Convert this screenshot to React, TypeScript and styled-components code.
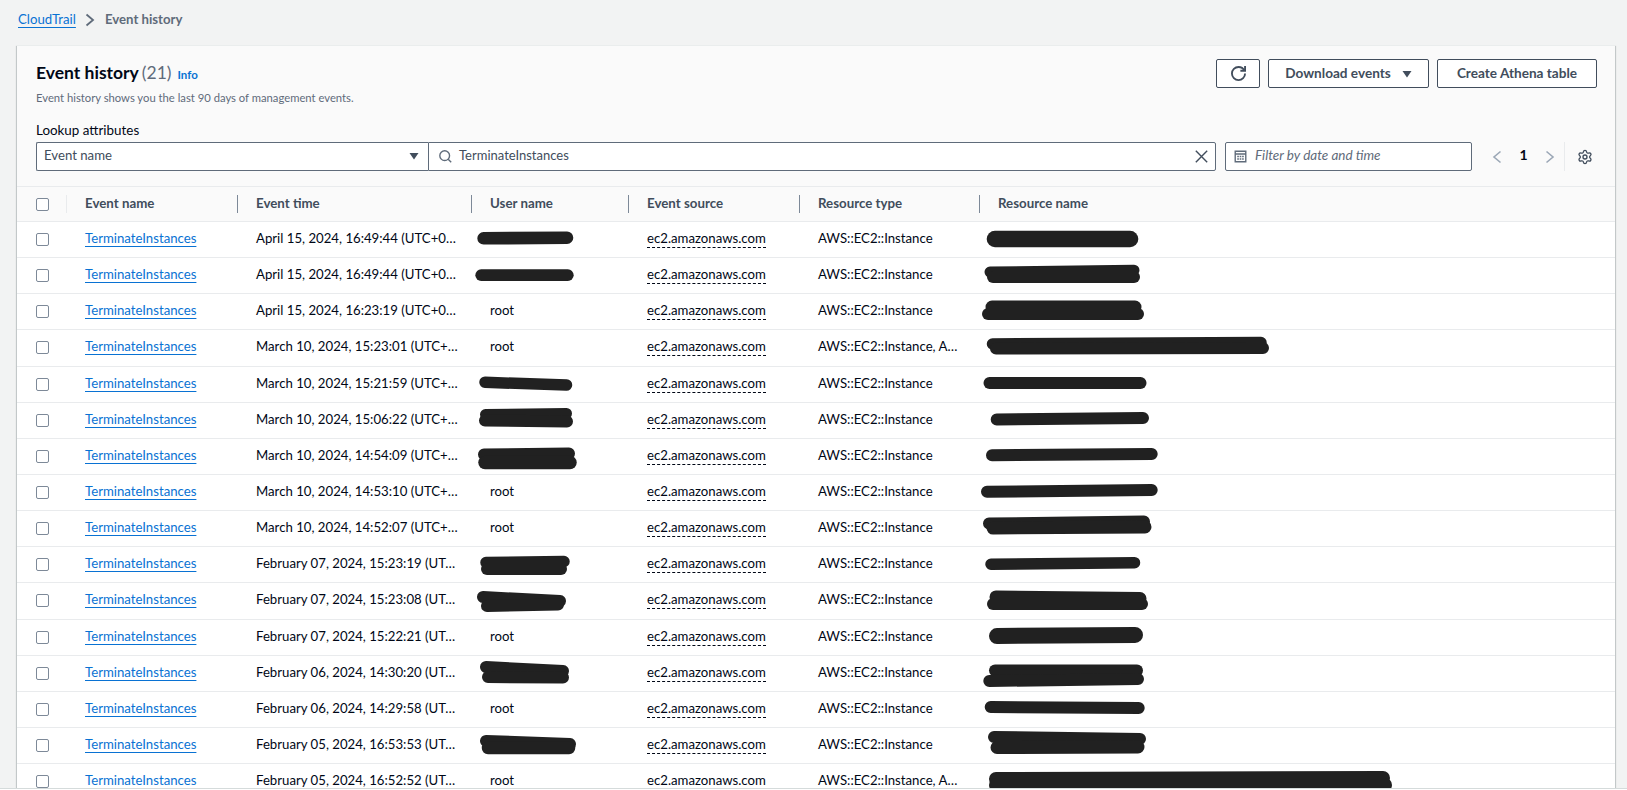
import React from "react";
import styled, { createGlobalStyle } from "styled-components";
import { Settings } from "lucide-react";

const GlobalStyle = createGlobalStyle`
  html, body {
    margin: 0;
    height: 100%;
    background: #f2f3f3;
  }
  body {
    font-family: Lato, Roboto, "Liberation Sans", sans-serif;
    font-size: 14px;
    color: #000716;
    overflow: hidden;
  }
  * {
    box-sizing: border-box;
  }
`;

const Page = styled.div`
  height: 790px;
  display: flex;
  flex-direction: column;
`;

const Main = styled.main`
  flex: 1;
  min-height: 0;
  overflow: hidden;
  padding: 0 12px 0 17px;
`;

const Footer = styled.footer`
  height: 2px;
  flex: none;
  background: #fff;
  border-top: 1px solid #d5dbdb;
`;

const Breadcrumbs = styled.nav`
  height: 45px;
  display: flex;
  align-items: flex-start;
  padding: 11px 0 0 1px;
  font-size: 13.2px;
  line-height: 17px;
`;

const CrumbLink = styled.a`
  color: #0972d3;
  text-decoration: underline;
  text-underline-offset: 3px;
`;

const CrumbChevron = styled.svg`
  width: 10px;
  height: 14px;
  margin: 2px 10px 0 9px;
  fill: none;
  stroke: #5f6b7a;
  stroke-width: 1.8;
`;

const CrumbCurrent = styled.span`
  color: #5f6b7a;
  font-weight: 700;
`;

const Card = styled.section`
  background: #fff;
  box-shadow: 0 1px 1px 0 rgba(0, 28, 36, 0.3), 1px 1px 1px 0 rgba(0, 28, 36, 0.15),
    -1px 1px 1px 0 rgba(0, 28, 36, 0.15);
  border-top: 1px solid #eaeded;
`;

const CardHeader = styled.header`
  background: #fafafa;
  padding: 13px 18px 15px 19px;
  border-bottom: 1px solid #e9ebed;
`;

const TopRow = styled.div`
  display: flex;
  justify-content: space-between;
  align-items: flex-start;
`;

const TitleBlock = styled.div`
  padding-top: 2px;
`;

const TitleLine = styled.div`
  display: flex;
  align-items: baseline;
  line-height: 24px;
`;

const Title = styled.h1`
  margin: 0;
  font-size: 17.5px;
  font-weight: 700;
  color: #000716;
`;

const Count = styled.span`
  margin-left: 3px;
  font-size: 17.5px;
  color: #5f6b7a;
`;

const InfoLink = styled.a`
  margin-left: 6px;
  font-size: 11.5px;
  font-weight: 700;
  color: #0972d3;
`;

const Description = styled.p`
  margin: 3px 0 0;
  font-size: 11.25px;
  line-height: 16px;
  color: #5f6b7a;
`;

const Actions = styled.div`
  display: flex;
  gap: 8px;
`;

const Button = styled.button<{ $width: number }>`
  width: ${(p) => p.$width}px;
  height: 29px;
  display: flex;
  align-items: center;
  justify-content: center;
  gap: 11px;
  padding: 0 0 2px;
  background: #fff;
  border: 1px solid #414d5c;
  border-radius: 2px;
  color: #414d5c;
  font-family: inherit;
  font-size: 13.6px;
  font-weight: 700;
`;

const RefreshIcon = styled.svg`
  width: 15px;
  height: 15px;
  margin-top: 2px;
  fill: none;
  stroke: #414d5c;
  stroke-width: 2;
`;

const Caret = styled.svg`
  width: 10px;
  height: 8px;
  margin-top: 2px;
  fill: currentColor;
`;

const LookupLabel = styled.label`
  display: block;
  margin-top: 15px;
  font-size: 13.4px;
  line-height: 18px;
`;

const FilterRow = styled.div`
  display: flex;
  align-items: center;
  margin-top: 3px;
`;

const Field = styled.div`
  height: 29px;
  display: flex;
  align-items: center;
  background: #fff;
  border: 1px solid #5f6b7a;
  border-radius: 2px;
  font-size: 13.2px;
`;

const SelectField = styled(Field)`
  width: 392px;
  flex: none;
  padding: 0 9px 4px 7px;
  justify-content: space-between;
  border-right: none;
  border-radius: 2px 0 0 2px;
  color: #414d5c;
`;

const SearchField = styled(Field)`
  width: 788px;
  flex: none;
  padding: 0 7px 0 10px;
  border-radius: 0 2px 2px 0;
`;

const FieldIcon = styled.svg`
  width: 13px;
  height: 13px;
  flex: none;
  fill: none;
  stroke: #5f6b7a;
  stroke-width: 1.7;
`;

const SearchText = styled.span`
  flex: 1;
  margin: 0 0 3px 7px;
  font-size: 13px;
  color: #414d5c;
`;

const ClearIcon = styled.svg`
  width: 13px;
  height: 13px;
  flex: none;
  fill: none;
  stroke: #414d5c;
  stroke-width: 1.7;
`;

const DateField = styled(Field)`
  width: 247px;
  flex: none;
  margin-left: 9px;
  padding: 0 0 0 8px;
`;

const DatePlaceholder = styled.span`
  margin: 0 0 4px 8px;
  font-style: italic;
  font-size: 13.5px;
  color: #5f6b7a;
`;

const Pager = styled.div`
  flex: 1;
  display: flex;
  align-items: center;
  justify-content: flex-end;
  height: 29px;
`;

const PagerChevron = styled.svg`
  width: 10px;
  height: 14px;
  fill: none;
  stroke: #9ba7b6;
  stroke-width: 1.6;
`;

const PageNumber = styled.span`
  width: 43px;
  margin-bottom: 4px;
  text-align: center;
  font-size: 14px;
  font-weight: 700;
`;

const PagerDivider = styled.span`
  width: 1px;
  height: 29px;
  margin: 0 12px 0 9px;
  background: #e9ebed;
`;

const GearIcon = styled(Settings)`
  width: 16px;
  height: 16px;
  margin-right: 4px;
  color: #414d5c;
`;

const COLUMNS = "49px 171px 234px 157px 171px 180px 1fr";

const HeadRow = styled.div`
  display: grid;
  grid-template-columns: ${COLUMNS};
  align-items: center;
  height: 35px;
  background: #fafafa;
  border-bottom: 1px solid #e9ebed;
`;

const HeadCell = styled.div<{ $faint?: boolean }>`
  height: 18px;
  padding-left: 18px;
  border-left: 1px solid ${(p) => (p.$faint ? "#e9ebed" : "#7d8998")};
  font-size: 13.3px;
  font-weight: 700;
  line-height: 16px;
  color: #414d5c;
`;

const CheckCell = styled.div`
  display: flex;
  padding-left: 19px;
`;

const Checkbox = styled.span`
  width: 13px;
  height: 13px;
  background: #fff;
  border: 1px solid #7d8998;
  border-radius: 2px;
`;

const RowCheckbox = styled(Checkbox)`
  margin-top: 3px;
`;

const Body = styled.div`
  position: relative;
`;

const Row = styled.div`
  display: grid;
  grid-template-columns: ${COLUMNS};
  align-items: center;
  height: 36.15px;
  padding-bottom: 3px;
  border-bottom: 1px solid #e9ebed;
`;

const Cell = styled.div`
  padding-left: 19px;
  font-size: 13.2px;
  line-height: 18px;
  white-space: nowrap;
`;

const EventLink = styled.a`
  color: #0972d3;
  text-decoration: underline;
  text-underline-offset: 3px;
`;

const SourceText = styled.span`
  border-bottom: 1px dashed #000716;
  padding-bottom: 1px;
`;

// scribbles over the user and resource names, in page coordinates
const Scribbles = styled.svg`
  position: absolute;
  top: 0;
  left: 0;
  pointer-events: none;
  stroke: #212121;
  stroke-linecap: round;
  fill: none;
`;

// x1, y1, x2, y2, width
const strokes: number[][] = [
  [483.6, 238.3, 567, 237.7, 12.6],
  [481.2, 275.2, 567.8, 275.2, 11.7],
  [485, 382.3, 566.5, 385, 11.5],
  [485.5, 414.5, 566.5, 413.5, 11],
  [485, 420.5, 567, 421.5, 12],
  [484, 454.5, 569, 453.5, 12],
  [485, 462.5, 570, 462.5, 13.5],
  [486, 562.5, 564, 561.5, 11.5],
  [487, 569, 561, 569, 12],
  [483, 597, 560, 601, 12],
  [487, 606, 558, 604.5, 12],
  [486, 667, 563, 671, 12],
  [488, 677, 563, 677.5, 12],
  [486, 741, 570, 744, 12],
  [488, 748, 569, 748, 12.5],
  [995, 239, 1130, 239, 16.6],
  [990, 272, 1134, 270.2, 11],
  [993, 277, 1134, 277, 12],
  [992, 307, 1135, 307, 13],
  [988, 314, 1138, 314, 12],
  [992.5, 344, 1261, 342.5, 11.5],
  [996, 348.5, 1263, 348, 12],
  [989.5, 383, 1140.5, 383, 12],
  [996.7, 419.5, 1143, 418, 12],
  [992, 455.3, 1151.7, 454, 12],
  [987, 491.7, 1151.7, 490, 12],
  [989, 523.5, 1144, 521.5, 12],
  [993, 528, 1145, 527, 13],
  [991, 564.2, 1134.5, 562.7, 11.5],
  [996, 597, 1140, 598.5, 13],
  [993, 604, 1142, 604, 12],
  [997, 636, 1135, 635, 16],
  [995, 670.5, 1137, 670.5, 12],
  [989.3, 681, 1138, 679, 12],
  [990.7, 707, 1138.7, 708, 12],
  [994, 737, 1140, 739, 12],
  [997, 747.5, 1138, 747, 13],
  [996, 779, 1383, 778, 14],
  [996, 785, 1385, 785, 14],
];

const rows = [
  { time: "April 15, 2024, 16:49:44 (UTC+0…", user: "", type: "AWS::EC2::Instance" },
  { time: "April 15, 2024, 16:49:44 (UTC+0…", user: "", type: "AWS::EC2::Instance" },
  { time: "April 15, 2024, 16:23:19 (UTC+0…", user: "root", type: "AWS::EC2::Instance" },
  { time: "March 10, 2024, 15:23:01 (UTC+…", user: "root", type: "AWS::EC2::Instance, A…" },
  { time: "March 10, 2024, 15:21:59 (UTC+…", user: "", type: "AWS::EC2::Instance" },
  { time: "March 10, 2024, 15:06:22 (UTC+…", user: "", type: "AWS::EC2::Instance" },
  { time: "March 10, 2024, 14:54:09 (UTC+…", user: "", type: "AWS::EC2::Instance" },
  { time: "March 10, 2024, 14:53:10 (UTC+…", user: "root", type: "AWS::EC2::Instance" },
  { time: "March 10, 2024, 14:52:07 (UTC+…", user: "root", type: "AWS::EC2::Instance" },
  { time: "February 07, 2024, 15:23:19 (UT…", user: "", type: "AWS::EC2::Instance" },
  { time: "February 07, 2024, 15:23:08 (UT…", user: "", type: "AWS::EC2::Instance" },
  { time: "February 07, 2024, 15:22:21 (UT…", user: "root", type: "AWS::EC2::Instance" },
  { time: "February 06, 2024, 14:30:20 (UT…", user: "", type: "AWS::EC2::Instance" },
  { time: "February 06, 2024, 14:29:58 (UT…", user: "root", type: "AWS::EC2::Instance" },
  { time: "February 05, 2024, 16:53:53 (UT…", user: "", type: "AWS::EC2::Instance" },
  { time: "February 05, 2024, 16:52:52 (UT…", user: "root", type: "AWS::EC2::Instance, A…" },
];

const headers = ["Event name", "Event time", "User name", "Event source", "Resource type", "Resource name"];

export default function App() {
  return (
    <Page>
      <GlobalStyle />
      <Main>
        <Breadcrumbs>
          <CrumbLink>CloudTrail</CrumbLink>
          <CrumbChevron viewBox="0 0 10 14">
            <path d="M1.5 1.5 8 7l-6.5 5.5" />
          </CrumbChevron>
          <CrumbCurrent>Event history</CrumbCurrent>
        </Breadcrumbs>
        <Card>
          <CardHeader>
            <TopRow>
              <TitleBlock>
                <TitleLine>
                  <Title>Event history</Title>
                  <Count>(21)</Count>
                  <InfoLink>Info</InfoLink>
                </TitleLine>
                <Description>Event history shows you the last 90 days of management events.</Description>
              </TitleBlock>
              <Actions>
                <Button $width={44} aria-label="Refresh">
                  <RefreshIcon viewBox="0 0 16 16">
                    <path d="M10 5h5V0" />
                    <path d="M15 8c0 3.87-3.13 7-7 7s-7-3.13-7-7 3.13-7 7-7c2.79 0 5.2 1.63 6.33 4" />
                  </RefreshIcon>
                </Button>
                <Button $width={161}>
                  Download events
                  <Caret viewBox="0 0 10 8">
                    <path d="M0.5 1h9L5 7.5z" />
                  </Caret>
                </Button>
                <Button $width={160}>Create Athena table</Button>
              </Actions>
            </TopRow>
            <LookupLabel>Lookup attributes</LookupLabel>
            <FilterRow>
              <SelectField>
                Event name
                <Caret viewBox="0 0 10 8">
                  <path d="M0.5 1h9L5 7.5z" />
                </Caret>
              </SelectField>
              <SearchField>
                <FieldIcon viewBox="0 0 16 16">
                  <circle cx="7" cy="7" r="6" />
                  <path d="m11.3 11.3 3.7 3.7" />
                </FieldIcon>
                <SearchText>TerminateInstances</SearchText>
                <ClearIcon viewBox="0 0 16 16">
                  <path d="m1 1 14 14M15 1 1 15" />
                </ClearIcon>
              </SearchField>
              <DateField>
                <FieldIcon viewBox="0 0 16 16">
                  <path d="M1.5 1.5h13v13h-13zM1.5 5h13" />
                  <path d="M4 8h2M7 8h2M10 8h2M4 11h2M7 11h2M10 11h2" strokeWidth="2" />
                </FieldIcon>
                <DatePlaceholder>Filter by date and time</DatePlaceholder>
              </DateField>
              <Pager>
                <PagerChevron viewBox="0 0 10 14">
                  <path d="M8.5 1.5 2 7l6.5 5.5" />
                </PagerChevron>
                <PageNumber>1</PageNumber>
                <PagerChevron viewBox="0 0 10 14">
                  <path d="M1.5 1.5 8 7l-6.5 5.5" />
                </PagerChevron>
                <PagerDivider />
                <GearIcon strokeWidth={2} />
              </Pager>
            </FilterRow>
          </CardHeader>
          <HeadRow>
            <CheckCell>
              <Checkbox />
            </CheckCell>
            {headers.map((h, i) => (
              <HeadCell key={h} $faint={i === 0}>
                {h}
              </HeadCell>
            ))}
          </HeadRow>
          <Body>
            {rows.map((r, i) => (
              <Row key={i}>
                <CheckCell>
                  <RowCheckbox />
                </CheckCell>
                <Cell>
                  <EventLink>TerminateInstances</EventLink>
                </Cell>
                <Cell>{r.time}</Cell>
                <Cell>{r.user}</Cell>
                <Cell>
                  <SourceText>ec2.amazonaws.com</SourceText>
                </Cell>
                <Cell>{r.type}</Cell>
                <Cell />
              </Row>
            ))}
            <Scribbles width="1598" height="600" viewBox="17 222 1598 600">
              {strokes.map(([x1, y1, x2, y2, w], i) => (
                <line key={i} x1={x1} y1={y1} x2={x2} y2={y2} strokeWidth={w} />
              ))}
            </Scribbles>
          </Body>
        </Card>
      </Main>
      <Footer />
    </Page>
  );
}
